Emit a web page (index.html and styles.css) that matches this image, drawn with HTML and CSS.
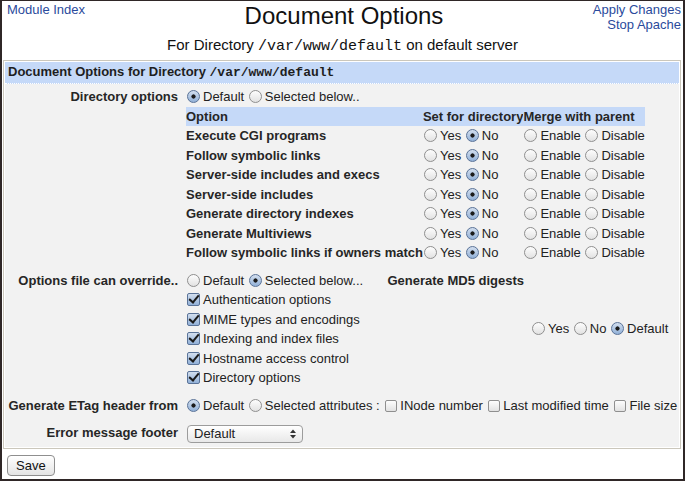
FILE: index.html
```html
<!DOCTYPE html>
<html>
<head>
<meta charset="utf-8">
<title>Document Options</title>
<link rel="stylesheet" href="styles.css">
</head>
<body>
<div class="frame">
  <header class="top">
    <div class="nav-left"><a href="#">Module Index</a></div>
    <h1>Document Options</h1>
    <div class="nav-right"><a href="#">Apply Changes</a><a href="#">Stop Apache</a></div>
  </header>
  <p class="sub">For Directory <code>/var/www/default</code> on default server</p>
  <form class="form">
    <div class="box">
      <div class="box-head">Document Options for Directory <code>/var/www/default</code></div>
      <div class="box-body">
        <div class="lbl">Directory options</div>
        <div class="val span3">
          <div class="line"><input type="radio" name="dopt" checked>Default <input type="radio" name="dopt">Selected below..</div>
          <div class="opts">
            <div class="h">Option</div><div class="h">Set for directory</div><div class="h">Merge with parent</div>

            <div class="n">Execute CGI programs</div>
            <div><input type="radio" name="s1">Yes <input type="radio" name="s1" checked>No</div>
            <div><input type="radio" name="m1">Enable <input type="radio" name="m1">Disable</div>

            <div class="n">Follow symbolic links</div>
            <div><input type="radio" name="s2">Yes <input type="radio" name="s2" checked>No</div>
            <div><input type="radio" name="m2">Enable <input type="radio" name="m2">Disable</div>

            <div class="n">Server-side includes and execs</div>
            <div><input type="radio" name="s3">Yes <input type="radio" name="s3" checked>No</div>
            <div><input type="radio" name="m3">Enable <input type="radio" name="m3">Disable</div>

            <div class="n">Server-side includes</div>
            <div><input type="radio" name="s4">Yes <input type="radio" name="s4" checked>No</div>
            <div><input type="radio" name="m4">Enable <input type="radio" name="m4">Disable</div>

            <div class="n">Generate directory indexes</div>
            <div><input type="radio" name="s5">Yes <input type="radio" name="s5" checked>No</div>
            <div><input type="radio" name="m5">Enable <input type="radio" name="m5">Disable</div>

            <div class="n">Generate Multiviews</div>
            <div><input type="radio" name="s6">Yes <input type="radio" name="s6" checked>No</div>
            <div><input type="radio" name="m6">Enable <input type="radio" name="m6">Disable</div>

            <div class="n">Follow symbolic links if owners match</div>
            <div><input type="radio" name="s7">Yes <input type="radio" name="s7" checked>No</div>
            <div><input type="radio" name="m7">Enable <input type="radio" name="m7">Disable</div>
          </div>
        </div>

        <div class="lbl">Options file can override..</div>
        <div class="val">
          <div class="line"><input type="radio" name="ov">Default <input type="radio" name="ov" checked>Selected below...</div>
          <div class="line"><input type="checkbox" checked>Authentication options</div>
          <div class="line"><input type="checkbox" checked>MIME types and encodings</div>
          <div class="line"><input type="checkbox" checked>Indexing and index files</div>
          <div class="line"><input type="checkbox" checked>Hostname access control</div>
          <div class="line"><input type="checkbox" checked>Directory options</div>
        </div>
        <div class="lbl">Generate MD5 digests</div>
        <div class="val mid"><input type="radio" name="md5">Yes <input type="radio" name="md5">No <input type="radio" name="md5" checked>Default</div>

        <div class="lbl">Generate ETag header from</div>
        <div class="val span3"><input type="radio" name="et" checked>Default <input type="radio" name="et">Selected attributes : <input type="checkbox" class="small">INode number <input type="checkbox" class="small">Last modified time <input type="checkbox" class="small">File size</div>

        <div class="lbl">Error message footer</div>
        <div class="val span3">
          <span class="sel">
            <select><option>Default</option></select>
            <svg viewBox="0 0 6 10" width="6" height="10"><polygon points="0,4 3,0.5 6,4" fill="#333"/><polygon points="0,6 3,9.5 6,6" fill="#333"/></svg>
          </span>
        </div>
      </div>
    </div>
    <button type="button" class="save">Save</button>
  </form>
</div>
</body>
</html>
```

FILE: styles.css
```css
* { box-sizing: border-box; }
html, body { margin: 0; padding: 0; }
body {
  font-family: "Liberation Sans", Arial, Helvetica, sans-serif;
  font-size: 13px;
  color: #222;
  background: #fff;
}
a { color: #2a4a9c; text-decoration: none; }

.frame {
  height: 481px;
  border: 2px solid #2f2727;
  border-top-width: 1px;
  display: flex;
  flex-direction: column;
}

.top {
  display: grid;
  grid-template-columns: 1fr auto 1fr;
  padding: 1px 2px 0 5px;
}
.nav-left { line-height: 15px; }
.top h1 {
  margin: 0;
  font-size: 24px;
  font-weight: normal;
  line-height: 28px;
  color: #111;
}
.nav-right {
  line-height: 15px;
  text-align: right;
  display: flex;
  flex-direction: column;
  align-items: flex-end;
}

.sub {
  margin: 4px 0 4px;
  text-align: center;
  font-size: 15px;
  line-height: 18px;
  color: #111;
}
.sub code { font-family: "Liberation Mono", "Courier New", monospace; font-size: 15px; }

.box {
  margin: 0 2px 0 1px;
  border: 1px solid #cbc7bc;
  padding: 1px;
  background: #fff;
}
.box-head {
  background: #c5d9f8;
  font-weight: bold;
  line-height: 20px;
  padding: 0 3px;
  border-bottom: 1px dotted #fff;
  color: #1e1e1e;
}
.box-head code { font-family: "Liberation Mono", "Courier New", monospace; font-size: 13px; font-weight: bold; }

.box-body {
  background: #f2f2f2;
  display: grid;
  grid-template-columns: 177px 202px 144px 1fr;
  padding: 3px 0 4px;
  row-gap: 8px;
}
.lbl {
  padding: 0 4px 0 0;
  text-align: right;
  font-weight: bold;
  line-height: 19.5px;
  white-space: nowrap;
  color: #262626;
}
.val {
  padding: 0 4px;
  line-height: 19.5px;
  white-space: nowrap;
}
.span3 { grid-column: 2 / 5; }
.mid { align-self: center; padding-left: 3px; }
.line { height: 19.5px; }

.opts {
  display: grid;
  grid-template-columns: repeat(3, max-content);
  width: max-content;
}
.opts > div { line-height: 19.5px; height: 19.5px; }
.opts .h { background: #c5d9f8; font-weight: bold; color: #262626; }
.opts .n { font-weight: bold; color: #262626; }

input[type=radio], input[type=checkbox] {
  -webkit-appearance: none;
  appearance: none;
  width: 13px;
  height: 13px;
  margin: 0 3px 0 1px;
  border: 1px solid #8f8f8f;
  background: linear-gradient(#fdfdfd, #e2e2e2);
  vertical-align: -2px;
  position: relative;
}
input[type=radio] { border-radius: 50%; }
input[type=radio]:checked {
  border-color: #5a7398;
  background: radial-gradient(circle, #1b1b1b 0 1.8px, transparent 2.4px), linear-gradient(#d2deee, #92b1d8);
}
input[type=checkbox] { border-radius: 2px; }
input[type=checkbox].small { width: 12px; height: 12px; margin: 0 3px 0 2px; }
input[type=checkbox]:checked {
  border-color: #5a7398;
  background: linear-gradient(#d2deee, #92b1d8);
}
input[type=checkbox]:checked::after {
  content: "";
  position: absolute;
  left: 3px;
  top: -1px;
  width: 4px;
  height: 8px;
  border: solid #1a1a1a;
  border-width: 0 2px 2px 0;
  transform: rotate(40deg);
}

.sel {
  position: relative;
  display: inline-block;
  vertical-align: middle;
  margin-left: 1px;
  height: 18px;
}
.sel select {
  -webkit-appearance: none;
  appearance: none;
  display: block;
  width: 116px;
  height: 18px;
  padding: 0 20px 0 6px;
  font: 13px "Liberation Sans", Arial, sans-serif;
  color: #222;
  border: 1px solid #9c9c9c;
  border-radius: 4px;
  background: linear-gradient(#ffffff, #e8e8e8);
}
.sel svg {
  position: absolute;
  right: 7px;
  top: 4px;
  pointer-events: none;
}

.save {
  margin: 6px 0 0 5px;
  height: 21px;
  padding: 0 8px;
  font: 13px "Liberation Sans", Arial, sans-serif;
  color: #111;
  border: 1px solid #8e8e8e;
  border-radius: 4px;
  background: linear-gradient(#ffffff, #e4e4e4);
}
```
